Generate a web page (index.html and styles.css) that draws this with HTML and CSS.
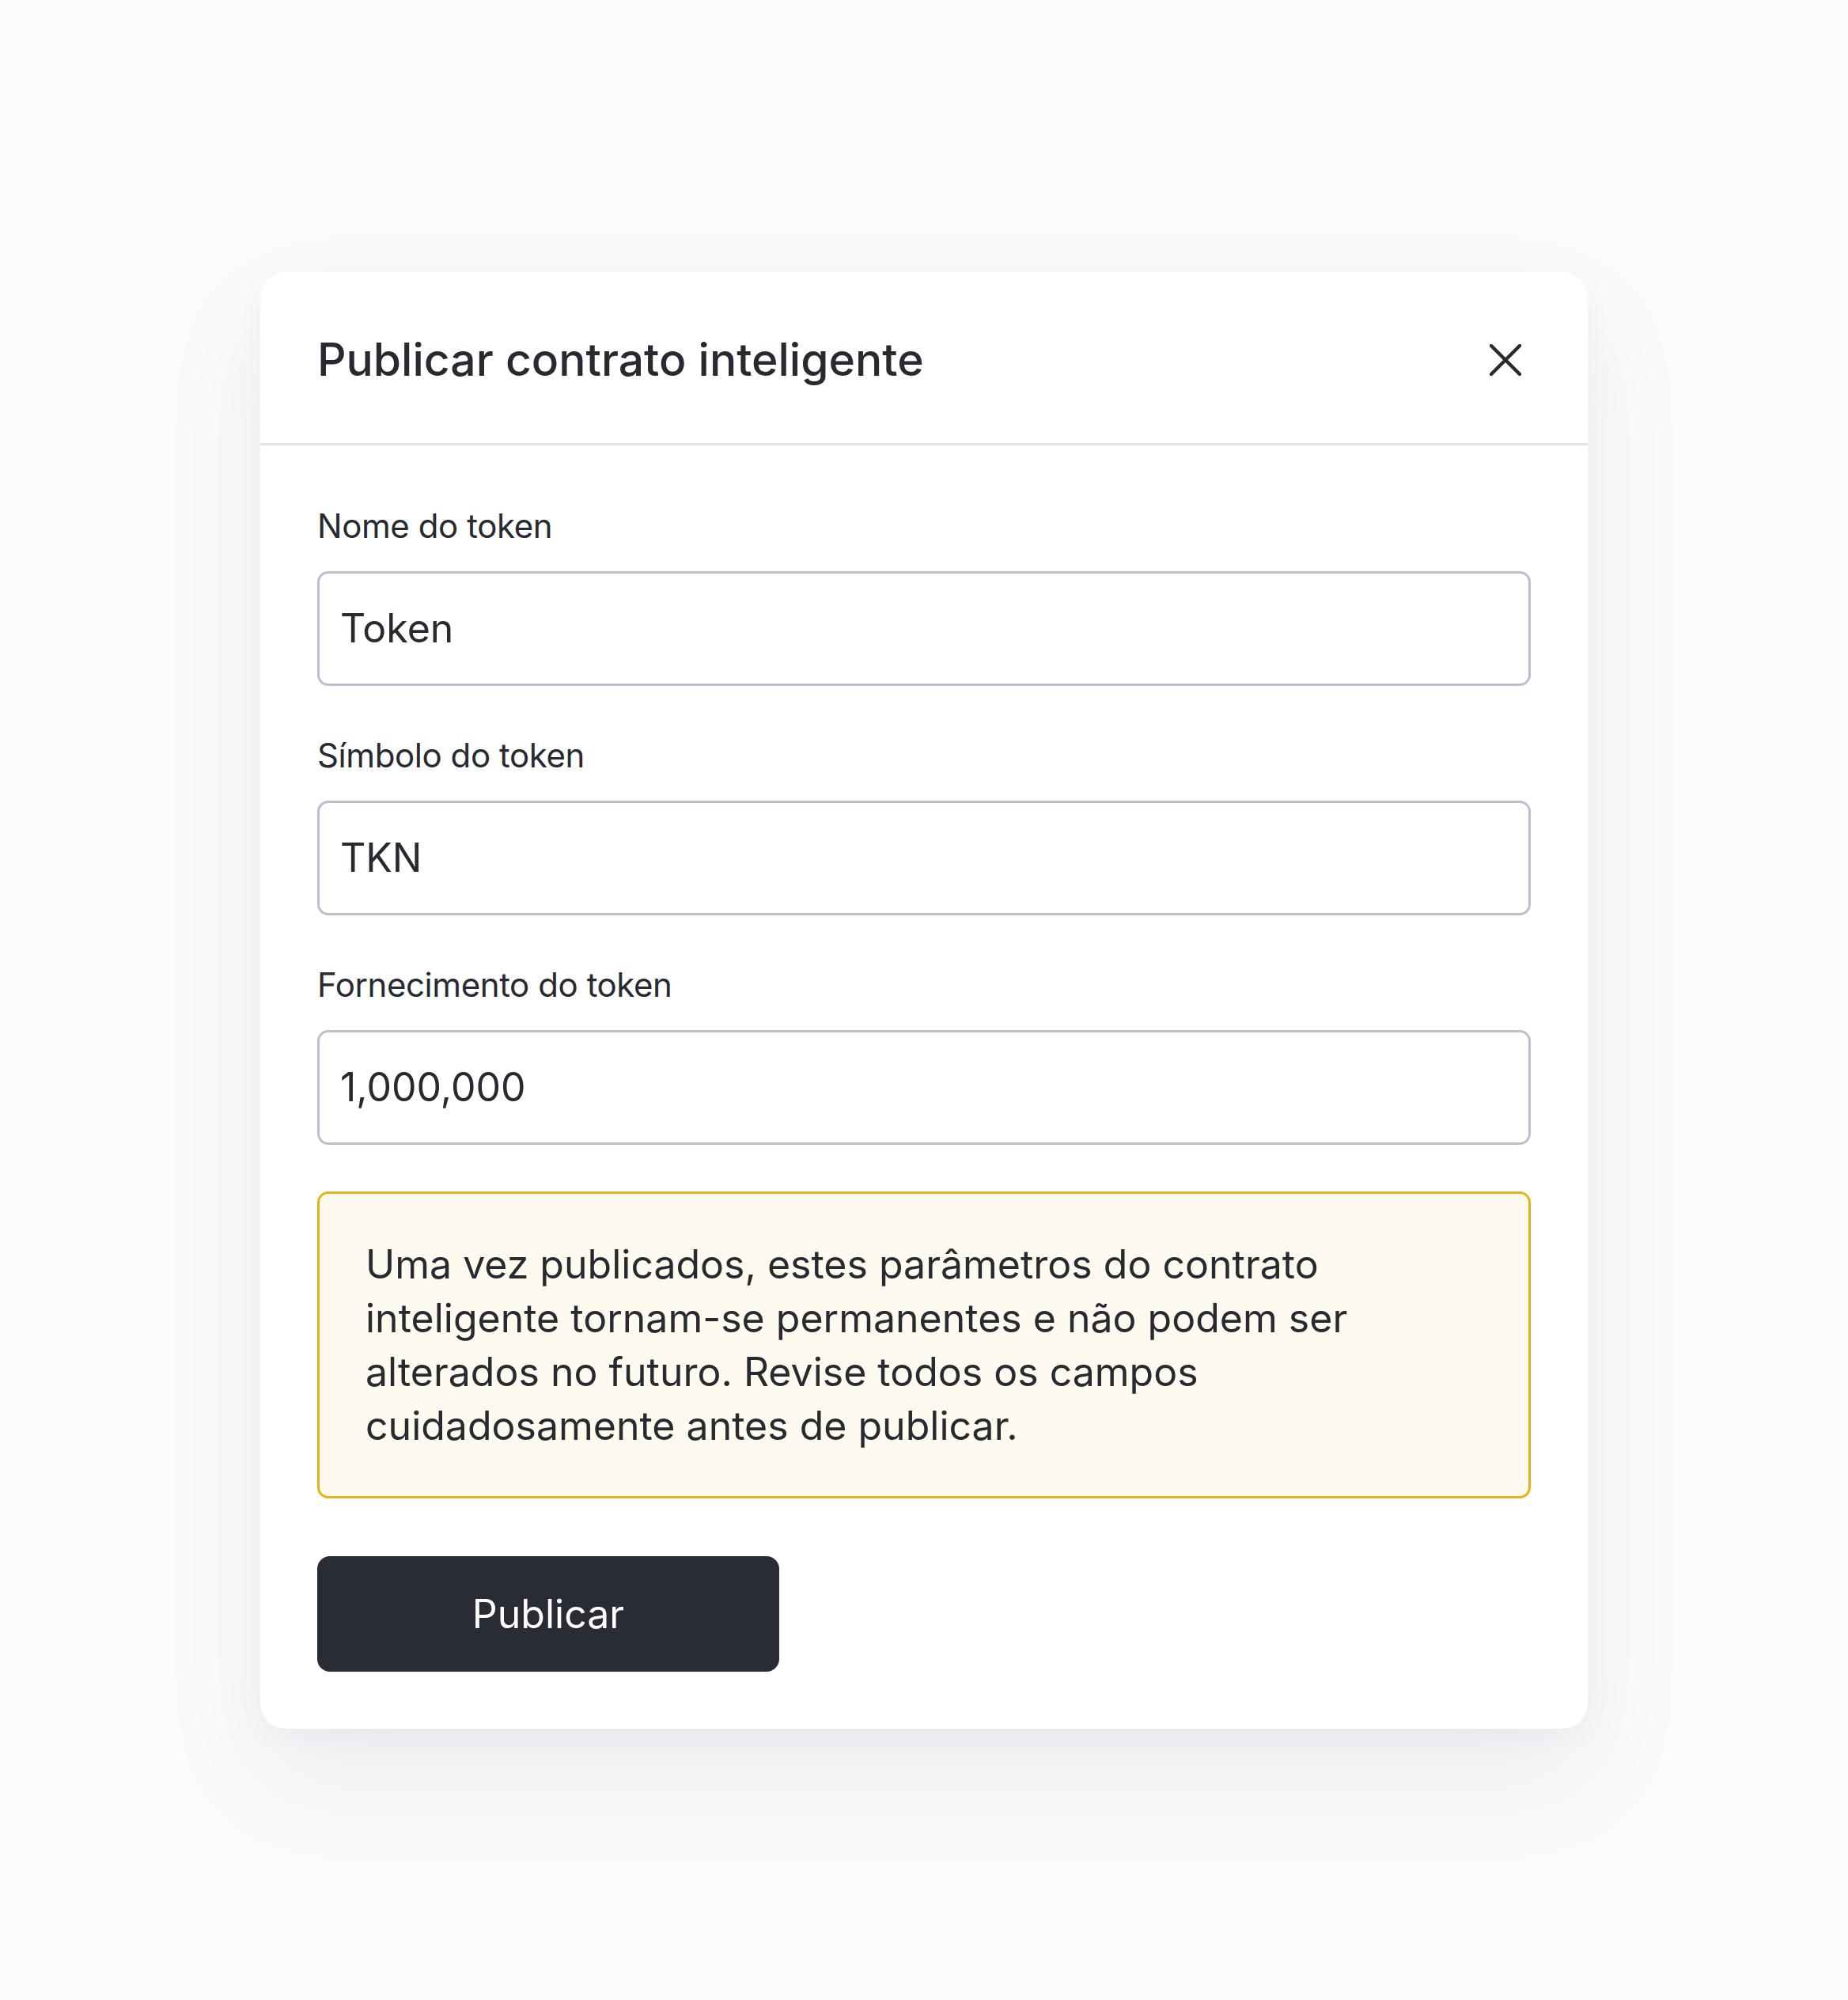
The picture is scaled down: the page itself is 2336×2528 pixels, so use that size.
FILE: index.html
```html
<!DOCTYPE html>
<html lang="pt">
<head>
<meta charset="utf-8">
<title>Publicar contrato inteligente</title>
<link rel="stylesheet" href="styles.css">
</head>
<body>
  <div class="modal">
    <div class="modal-header">
      <h1 class="modal-title">Publicar contrato inteligente</h1>
      <button class="close-btn" aria-label="Fechar">
        <svg width="40" height="40" viewBox="0 0 40 40" fill="none" stroke="currentColor" stroke-width="4.4" stroke-linecap="round">
          <path d="M2 2L38 38M38 2L2 38"/>
        </svg>
      </button>
    </div>
    <div class="modal-body">
      <div class="field">
        <label class="field-label" for="nome">Nome do token</label>
        <input class="field-input" id="nome" type="text" value="Token">
      </div>
      <div class="field">
        <label class="field-label" for="simbolo">Símbolo do token</label>
        <input class="field-input" id="simbolo" type="text" value="TKN">
      </div>
      <div class="field">
        <label class="field-label" for="fornecimento">Fornecimento do token</label>
        <input class="field-input" id="fornecimento" type="text" value="1,000,000">
      </div>
      <div class="warning">
        <p class="warning-text">Uma vez publicados, estes parâmetros do contrato<br>inteligente tornam-se permanentes e não podem ser<br>alterados no futuro. Revise todos os campos<br>cuidadosamente antes de publicar.</p>
      </div>
      <button class="publish-btn">Publicar</button>
    </div>
  </div>
</body>
</html>
```

FILE: styles.css
```css
* {
  box-sizing: border-box;
}

html, body {
  margin: 0;
  padding: 0;
}

body {
  min-height: 100vh;
  background: #fbfbfc;
  font-family: "Inter", "Roboto", "Liberation Sans", sans-serif;
  color: #272a31;
  display: flex;
  align-items: center;
  justify-content: center;
}

.modal {
  width: 1678px;
  background: #ffffff;
  border-radius: 32px;
  box-shadow: 0 60px 140px rgba(40, 40, 90, 0.07), 0 10px 40px rgba(40, 40, 90, 0.03);
}

.modal-header {
  height: 219px;
  padding: 6px 84px 0 72px;
  border-bottom: 3px solid #e3e5ea;
  display: flex;
  align-items: center;
  justify-content: space-between;
}

.modal-title {
  margin: 0;
  font-size: 57px;
  font-weight: 500;
  letter-spacing: 0;
  color: #272a31;
}

.close-btn {
  width: 40px;
  height: 40px;
  padding: 0;
  border: 0;
  background: none;
  color: #272a31;
  display: flex;
}

.modal-body {
  padding: 72px;
  display: flex;
  flex-direction: column;
  align-items: flex-start;
}

.field {
  width: 100%;
  display: flex;
  flex-direction: column;
  margin-bottom: 58px;
}

.field:nth-child(3) {
  margin-bottom: 59px;
}

.field-label {
  font-size: 42px;
  line-height: 60px;
  margin-bottom: 27px;
  letter-spacing: -0.01em;
  color: #272a31;
}

.field-input {
  width: 100%;
  height: 145px;
  border: 3px solid #b8c1cd;
  border-radius: 14px;
  padding: 0 26px;
  font-family: inherit;
  font-size: 50px;
  letter-spacing: 0;
  color: #272a31;
  background: #ffffff;
  outline: none;
}

.warning {
  width: 100%;
  border: 3px solid #e8b11a;
  border-radius: 14px;
  background: #fffaef;
  padding: 55px 58px;
}

.warning-text {
  margin: 0;
  font-size: 50px;
  line-height: 68px;
  letter-spacing: 0;
  color: #272a31;
}

.publish-btn {
  margin-top: 73px;
  width: 584px;
  height: 146px;
  border: 0;
  border-radius: 16px;
  background: #292c34;
  color: #ffffff;
  font-family: inherit;
  font-size: 50px;
  letter-spacing: 0;
}
```
